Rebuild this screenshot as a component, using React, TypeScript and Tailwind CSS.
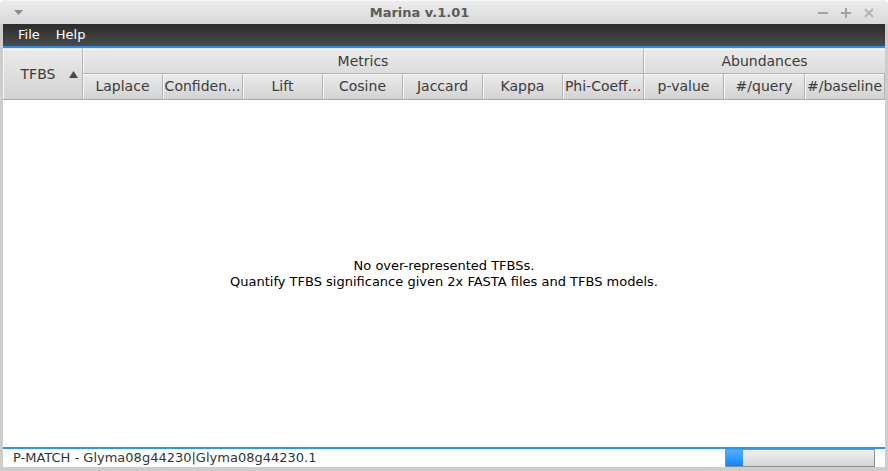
import React from 'react';

const metrics = ['Laplace', 'Confiden...', 'Lift', 'Cosine', 'Jaccard', 'Kappa', 'Phi-Coeff...'];
const abundances = ['p-value', '#/query', '#/baseline'];

function HeaderCell({ label, w }: { label: string; w: string }) {
  return (
    <div
      className={`${w} h-[25px] shrink-0 flex items-center justify-center overflow-hidden whitespace-nowrap border-r border-[#b3b3b3] bg-gradient-to-b from-[#ebebeb] to-[#d3d3d3] shadow-[inset_1px_1px_0_#f7f7f7] text-[14px] text-[#3b3b3b]`}
    >
      {label}
    </div>
  );
}

export default function App() {
  return (
    <div className="w-[888px] h-[471px] flex flex-col bg-[#cdcdcd] rounded-t-[6px] overflow-hidden font-['DejaVu_Sans',sans-serif]">
      {/* title bar */}
      <div className="h-[24px] shrink-0 flex items-center pl-[14px] pr-[14px] bg-gradient-to-b from-[#ececec] to-[#d9d9d9] border-t border-[#f8f8f8]">
        <svg width="9" height="6" viewBox="0 0 9 6" className="mt-[1px]">
          <path d="M0 0 H9 L4.5 5 Z" fill="#8d8d8d" />
        </svg>
        <div className="flex-1 text-center text-[13px] font-bold text-[#5b5b5b] pr-[2px]">Marina v.1.01</div>
        <div className="flex items-center gap-[13px]">
          <svg width="10" height="10" viewBox="0 0 10 10"><path d="M0 5 H10" stroke="#a3a3a3" strokeWidth="2" /></svg>
          <svg width="10" height="10" viewBox="0 0 10 10"><path d="M0 5 H10 M5 0 V10" stroke="#a3a3a3" strokeWidth="2" /></svg>
          <svg width="10" height="10" viewBox="0 0 10 10"><path d="M1 1 L9 9 M9 1 L1 9" stroke="#b3b3b3" strokeWidth="2" /></svg>
        </div>
      </div>

      <div className="flex-1 flex flex-col pl-[3px] pr-[3px]">
        {/* menu bar */}
        <div className="h-[22px] shrink-0 flex items-center gap-[16px] pl-[15px] bg-gradient-to-b from-[#2c2c2c] to-[#4b4b4b] text-[13px] text-white">
          <span>File</span>
          <span>Help</span>
        </div>
        <div className="h-[2px] shrink-0 bg-[#2a8de6]" />

        {/* table header */}
        <div className="flex shrink-0 border-t border-[#e2e2e2] border-b border-b-[#a9a9a9] bg-[#d6d6d6]">
          <div className="w-[80px] h-[50px] shrink-0 flex items-center justify-center gap-[14px] pl-[14px] border-r border-[#b3b3b3] bg-gradient-to-b from-[#ebebeb] to-[#d3d3d3] shadow-[inset_1px_1px_0_#f7f7f7] text-[14px] text-[#3b3b3b]">
            <span>TFBS</span>
            <svg width="9" height="7" viewBox="0 0 9 7">
              <path d="M0 7 L4.5 0 L9 7 Z" fill="#474747" />
            </svg>
          </div>
          <div className="flex flex-col">
            <div className="h-[25px] flex items-center justify-center border-r border-b border-[#b3b3b3] bg-gradient-to-b from-[#ebebeb] to-[#dcdcdc] shadow-[inset_1px_1px_0_#f7f7f7] text-[14px] text-[#3b3b3b]">
              Metrics
            </div>
            <div className="flex">
              {metrics.map((m, i) => (
                <HeaderCell key={m} label={m} w={i === 6 ? 'w-[81px]' : 'w-[80px]'} />
              ))}
            </div>
          </div>
          <div className="flex flex-col flex-1 min-w-0">
            <div className="h-[25px] flex items-center justify-center border-b border-[#b3b3b3] bg-gradient-to-b from-[#ebebeb] to-[#dcdcdc] shadow-[inset_1px_1px_0_#f7f7f7] text-[14px] text-[#3b3b3b]">
              Abundances
            </div>
            <div className="flex">
              {abundances.map((m, i) => (
                <HeaderCell key={m} label={m} w={i === 1 ? 'w-[81px]' : 'w-[80px]'} />
              ))}
            </div>
          </div>
        </div>

        {/* table body */}
        <div className="flex-1 bg-white flex flex-col items-center justify-center text-[13px] leading-[16px] text-black pt-[1px]">
          <div>No over-represented TFBSs.</div>
          <div>Quantify TFBS significance given 2x FASTA files and TFBS models.</div>
        </div>

        <div className="h-[2px] shrink-0 bg-[#2a98f0]" />

        {/* status bar */}
        <div className="h-[18px] shrink-0 flex items-center bg-white">
          <span className="flex-1 pl-[10px] text-[13px] text-[#333333] -mt-[1px]">P-MATCH - Glyma08g44230|Glyma08g44230.1</span>
          <div className="w-[150px] h-[18px] mr-[10px] flex border border-[#8e8e8e] bg-gradient-to-b from-[#f0f0f0] to-[#d5d5d5]">
            <div className="w-[17px] bg-gradient-to-b from-[#4fb0ff] to-[#0a84f5]" />
          </div>
        </div>
      </div>
      <div className="h-[4px] shrink-0" />
    </div>
  );
}
